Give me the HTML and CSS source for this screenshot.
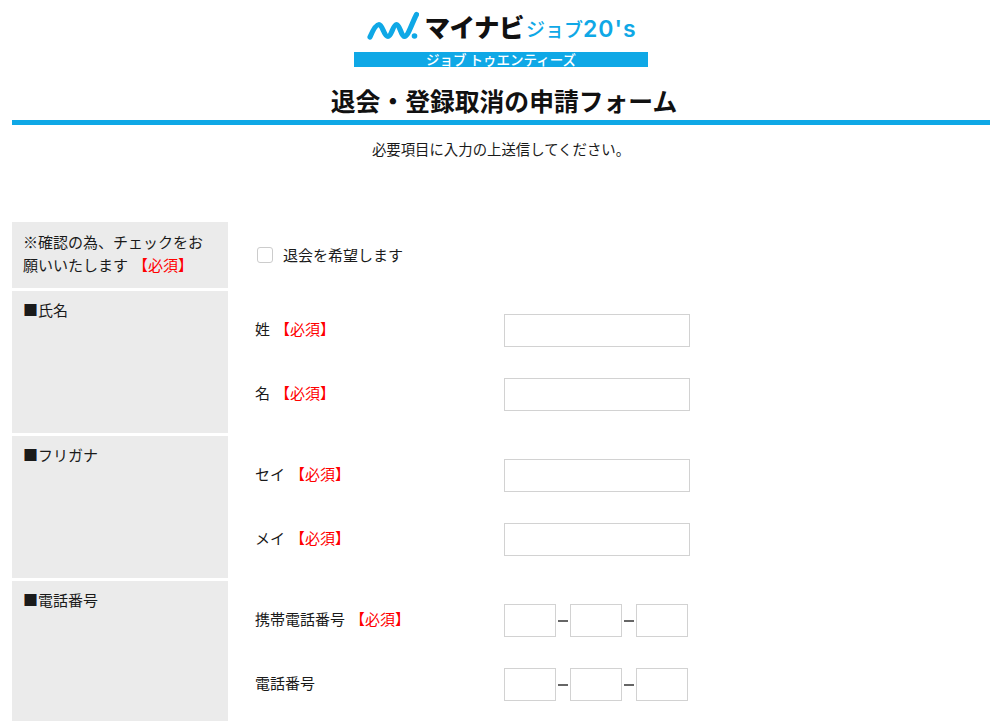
FILE: index.html
```html
<!DOCTYPE html>
<html lang="ja">
<head>
<meta charset="utf-8">
<title>退会・登録取消の申請フォーム</title>
<link rel="stylesheet" href="styles.css">
</head>
<body>
<header class="header">
  <div class="logo">
    <div class="logo-main">
      <svg class="logo-mark" viewBox="0 0 52 30" width="52" height="30" aria-hidden="true">
        <path d="M3 26 C6 19 9 13.5 12 13.5 C15.5 13.5 17 25.5 21 25.5 C24.5 25.5 26 13.5 29.5 13.5 C33 13.5 34 25.5 37.5 25.5 C41 25.5 45 12 49.5 3.5" fill="none" stroke="#0fa8e6" stroke-width="5.2" stroke-linecap="round" stroke-linejoin="round"/>
        <circle cx="47.5" cy="25" r="2.8" fill="#0fa8e6"/>
      </svg>
      <span class="logo-name">マイナビ</span>
      <span class="logo-sub">ジョブ<span class="logo-num">20's</span></span>
    </div>
    <div class="logo-band">ジョブ トゥエンティーズ</div>
  </div>
  <h1 class="title">退会・登録取消の申請フォーム</h1>
</header>
<p class="lead">必要項目に入力の上送信してください。</p>
<form class="form">
  <div class="row row-check">
    <div class="label">※確認の為、チェックをお願いいたします <span class="req">【必須】</span></div>
    <div class="body check-body">
      <span class="checkbox"></span>
      <span class="check-text">退会を希望します</span>
    </div>
  </div>
  <div class="row">
    <div class="label">■氏名</div>
    <div class="body">
      <div class="field"><div class="field-label">姓 <span class="req">【必須】</span></div><span class="input"></span></div>
      <div class="field"><div class="field-label">名 <span class="req">【必須】</span></div><span class="input"></span></div>
    </div>
  </div>
  <div class="row">
    <div class="label">■フリガナ</div>
    <div class="body">
      <div class="field"><div class="field-label">セイ <span class="req">【必須】</span></div><span class="input"></span></div>
      <div class="field"><div class="field-label">メイ <span class="req">【必須】</span></div><span class="input"></span></div>
    </div>
  </div>
  <div class="row">
    <div class="label">■電話番号</div>
    <div class="body">
      <div class="field"><div class="field-label">携帯電話番号 <span class="req">【必須】</span></div><div class="tel"><span class="input small"></span><span class="dash"></span><span class="input small"></span><span class="dash"></span><span class="input small"></span></div></div>
      <div class="field"><div class="field-label">電話番号</div><div class="tel"><span class="input small"></span><span class="dash"></span><span class="input small"></span><span class="dash"></span><span class="input small"></span></div></div>
    </div>
  </div>
</form>
</body>
</html>
```
FILE: styles.css
```css
* { box-sizing: border-box; }
html, body { height: 721px; overflow: hidden; }
body {
  margin: 0;
  padding: 0 10px 0 12px;
  background: #fff;
  color: #1a1a1a;
  font-family: "Noto Sans CJK JP", "Liberation Sans", sans-serif;
  font-size: 15px;
}
.header { border-bottom: 5px solid #0fa8e6; height: 125px; display: flex; flex-direction: column; align-items: center; }
.logo { width: 294px; padding-top: 10px; height: 67px; display: flex; flex-direction: column; }
.logo-main { display: flex; align-items: center; justify-content: center; height: 31px; white-space: nowrap; padding-left: 2px; margin: 0 -10px; }
.logo-mark { margin-right: 5px; flex: none; }
.logo-name { font-size: 25.5px; line-height: 30px; font-weight: 900; color: #111; letter-spacing: -0.5px; }
.logo-sub { font-size: 19px; line-height: 30px; color: #0fa8e6; margin-left: 2px; font-weight: 500; margin-top: 6px; }
.logo-num { font-family: "Inter", sans-serif; font-size: 23px; font-weight: 600; letter-spacing: 1px; }
.logo-band { margin-top: 11px; height: 15px; background: #0fa8e6; color: #fff; font-size: 13.5px; line-height: 15px; text-align: center; font-weight: 500; flex: none; white-space: nowrap; }
.title { margin: 17px 0 0; padding-left: 6px; font-size: 24.8px; line-height: 32px; font-weight: 700; color: #111; text-align: center; }
.lead { margin: 14px 0 0; height: 20px; font-size: 14.4px; line-height: 20px; text-align: center; }
.form { margin-top: 63px; display: flex; flex-direction: column; gap: 3px; }
.row { display: flex; height: 142px; }
.row-check { height: 66px; }
.label { flex: none; width: 216px; background: #ebebeb; padding: 9px 14px 0 11px; line-height: 22.5px; }
.row:not(.row-check) .label { padding-top: 8px; }
.req { color: #f00; margin-left: 1.5px; }
.body { flex: 1; padding: 23px 0 0 27px; display: flex; flex-direction: column; gap: 31px; }
.check-body { flex-direction: row; align-items: center; gap: 10px; padding: 0 0 0 29px; }
.check-text { padding-bottom: 2px; }
.checkbox { width: 16px; height: 16px; border: 1px solid #ccc; border-radius: 3px; background: #fff; }
.field { display: flex; align-items: center; height: 33px; }
.field-label { width: 249px; flex: none; padding-bottom: 4px; }
.input { display: block; width: 186px; height: 33px; border: 1px solid #d2d2d2; background: #fff; }
.input.small { width: 52px; }
.tel { display: flex; align-items: center; }
.dash { width: 10px; height: 2px; background: #666; margin: 0 2px; }
```
